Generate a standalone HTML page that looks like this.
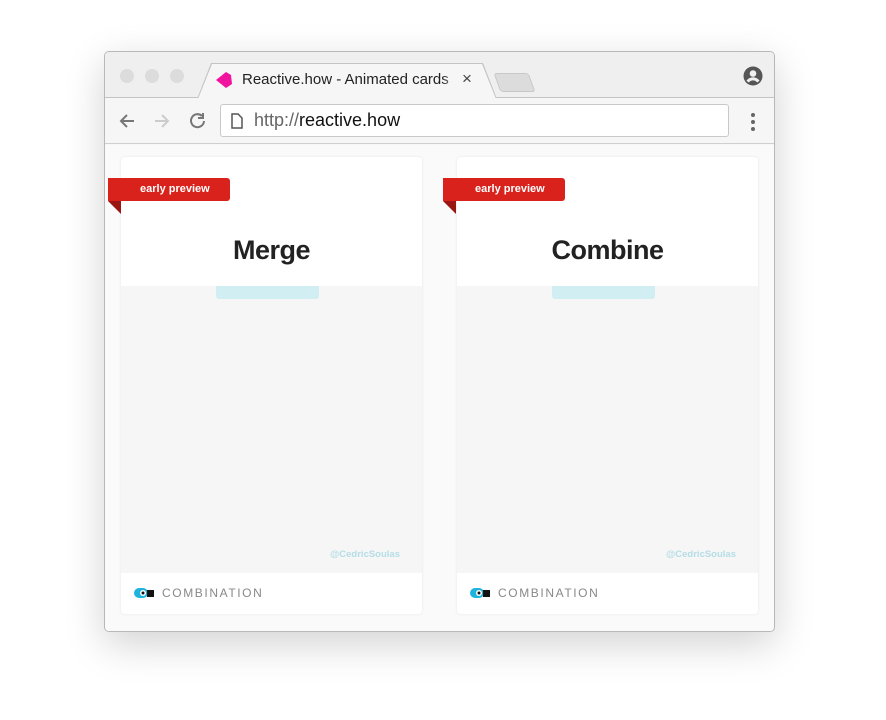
<!DOCTYPE html>
<html><head><style>
*{margin:0;padding:0;box-sizing:border-box}
body{width:886px;height:720px;background:#fff;position:relative;font-family:"Liberation Sans",sans-serif;overflow:hidden}
.win{position:absolute;left:104px;top:51px;width:671px;height:581px;border:1px solid #b8b8b8;border-radius:5px;background:#f6f6f6;box-shadow:0 12px 40px rgba(0,0,0,.18);overflow:hidden}
.tabbar{position:absolute;left:0;top:0;width:100%;height:46px;background:#efefef;border-bottom:1px solid #c4c4c4}
.dot{position:absolute;top:17px;width:14px;height:14px;border-radius:50%;background:#dcdcdc}
.tab{position:absolute;left:92px;top:11px;width:300px;height:36px;background:#c4c4c4;clip-path:polygon(0 100%,14px 0,286px 0,100% 100%)}
.tab2{position:absolute;left:93px;top:12px;width:298px;height:35px;background:#f6f6f6;clip-path:polygon(0 100%,14px 0,284px 0,100% 100%)}
.toolbar{position:absolute;left:0;top:46px;width:100%;height:46px;background:#f6f6f6;border-bottom:1px solid #cfcfcf}
.url{position:absolute;left:115px;top:6px;width:509px;height:33px;background:#fff;border:1px solid #c9c9c9;border-radius:3px;font-size:18px;line-height:31px;padding-left:33px;color:#111}
.content{position:absolute;left:0;top:93px;width:100%;height:488px;background:#fafafa}
.card{position:absolute;top:12px;width:301px;height:457px;background:#f6f6f6;border-radius:4px;box-shadow:0 0 3px rgba(0,0,0,.08);overflow:hidden}
.head{position:absolute;left:0;top:0;width:100%;height:129px;background:#fff}
.title{position:absolute;top:78px;width:100%;text-align:center;font-size:27px;font-weight:bold;color:#222;letter-spacing:-.5px}
.pill{position:absolute;left:95px;top:129px;width:103px;height:13px;background:#d1eef3;border-radius:0 0 3px 3px}
.foot{position:absolute;left:0;bottom:0;width:100%;height:41px;background:#fff}
.cat{position:absolute;left:41px;top:13px;font-size:12px;letter-spacing:1.6px;color:#888}
.handle{position:absolute;right:22px;top:392px;font-size:9.5px;color:#b4dde5;font-weight:bold}
.ribbon{position:absolute;top:33px;width:122px;height:23px;background:#d9221c;border-radius:0 3px 3px 0;color:#fff;font-size:11px;font-weight:bold;line-height:23px;padding-left:32px}
.fold{position:absolute;top:56px;width:0;height:0;border-top:13px solid #9a1612;border-left:13px solid transparent}
</style></head><body>
<div class="win">
 <div class="tabbar">
  <div class="dot" style="left:15px"></div><div class="dot" style="left:40px"></div><div class="dot" style="left:65px"></div>
  <div class="tab"></div><div class="tab2"></div>
  <svg style="position:absolute;left:110px;top:19px" width="18" height="18"><polygon points="1,9 11,1 16,4 17,13 11,17" fill="#f0139d"/></svg>
  <div style="position:absolute;left:137px;top:19px;font-size:15px;color:#222;white-space:nowrap;width:220px;overflow:hidden;-webkit-mask-image:linear-gradient(90deg,#000 200px,transparent 220px)">Reactive.how - Animated cards</div>
  <div style="position:absolute;left:357px;top:17px;font-size:17px;color:#444">×</div>
  <div style="position:absolute;left:392px;top:21px;width:35px;height:19px;background:#dcdcdc;border:1px solid #c8c8c8;border-radius:3px;transform:skewX(20deg)"></div>
  <svg style="position:absolute;left:638px;top:14px" width="20" height="20"><circle cx="10" cy="10" r="9.5" fill="#555"/><circle cx="10" cy="7.5" r="3.3" fill="#efefef"/><path d="M4.5 15.5 Q10 10 15.5 15.5" stroke="#efefef" stroke-width="3" fill="none"/></svg>
 </div>
 <div class="toolbar">
  <svg style="position:absolute;left:13px;top:14px" width="18" height="18" stroke="#777" stroke-width="2" fill="none"><path d="M16 9H3M9 3L3 9L9 15"/></svg>
  <svg style="position:absolute;left:48px;top:14px" width="18" height="18" stroke="#ccc" stroke-width="2" fill="none"><path d="M2 9H15M9 3L15 9L9 15"/></svg>
  <svg style="position:absolute;left:83px;top:13px" width="20" height="20" stroke="#777" stroke-width="2" fill="none"><path d="M16 10A6.5 6.5 0 1 1 14 5"/><path d="M15 2V7H10" fill="none"/></svg>
  <div class="url"><svg style="position:absolute;left:10px;top:8px" width="12" height="16" stroke="#555" stroke-width="1.5" fill="none"><path d="M1 1H7L11 5V15H1Z"/></svg><span style="color:#666">http://</span>reactive.how</div>
  <svg style="position:absolute;left:645px;top:14px" width="6" height="20" fill="#666"><circle cx="3" cy="3" r="2"/><circle cx="3" cy="10" r="2"/><circle cx="3" cy="17" r="2"/></svg>
 </div>
 <div class="content">
  <div class="card" style="left:16px">
   <div class="head"></div><div class="title">Merge</div><div class="pill"></div>
   <div class="handle">@CedricSoulas</div>
   <div class="foot"><svg style="position:absolute;left:13px;top:14px" width="20" height="12"><rect x="0" y="1" width="14" height="10" rx="5" fill="#1fb4dc"/><rect x="13" y="3" width="7" height="7" fill="#111"/><circle cx="9" cy="6" r="3" fill="#fff"/><circle cx="9" cy="6" r="1.5" fill="#111"/></svg><div class="cat">COMBINATION</div></div>
  </div>
  <div class="card" style="left:352px">
   <div class="head"></div><div class="title">Combine</div><div class="pill"></div>
   <div class="handle">@CedricSoulas</div>
   <div class="foot"><svg style="position:absolute;left:13px;top:14px" width="20" height="12"><rect x="0" y="1" width="14" height="10" rx="5" fill="#1fb4dc"/><rect x="13" y="3" width="7" height="7" fill="#111"/><circle cx="9" cy="6" r="3" fill="#fff"/><circle cx="9" cy="6" r="1.5" fill="#111"/></svg><div class="cat">COMBINATION</div></div>
  </div>
  <div class="ribbon" style="left:3px">early preview</div><div class="fold" style="left:3px"></div>
  <div class="ribbon" style="left:338px">early preview</div><div class="fold" style="left:338px"></div>
 </div>
</div>
</body></html>
